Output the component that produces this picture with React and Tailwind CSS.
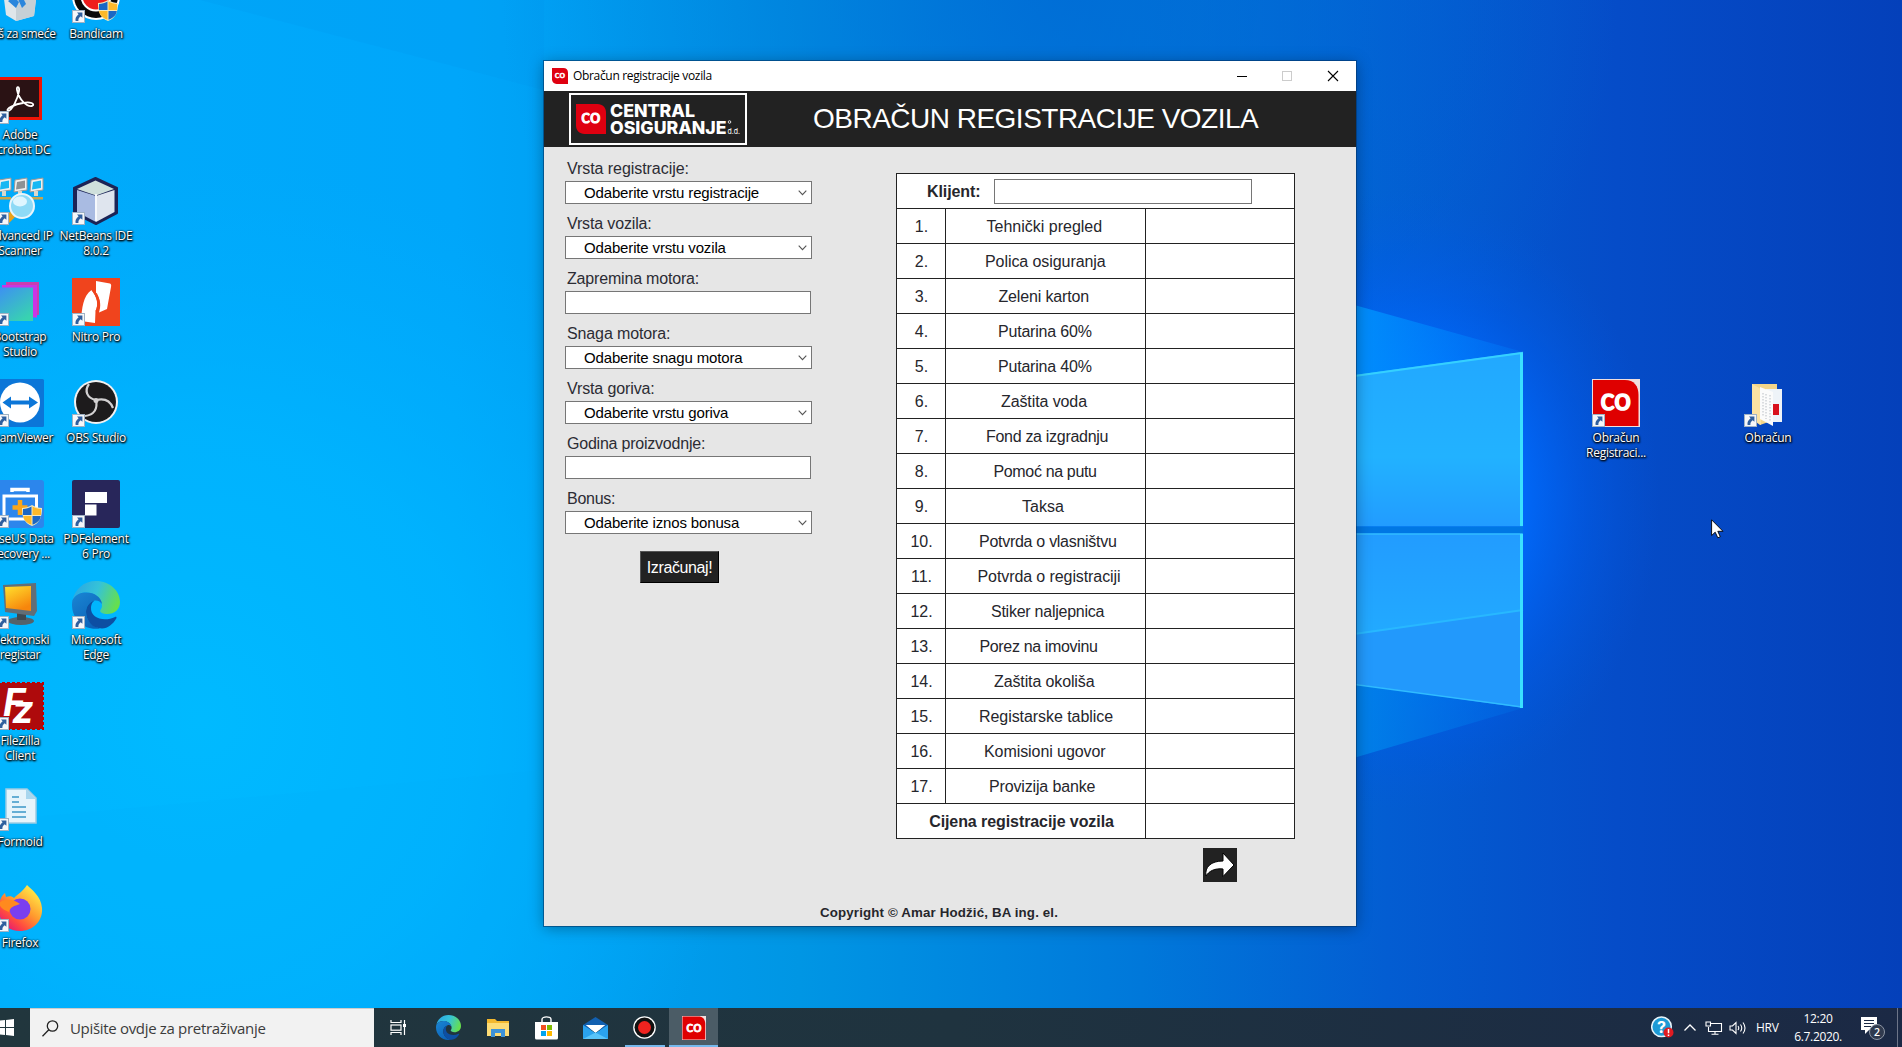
import React from "react";

const ROWS = [
  ["Tehnički pregled", "pl-[40.5px]"],
  ["Polica osiguranja", "pl-[39px] tracking-[-0.07px]"],
  ["Zeleni karton", "pl-[52.5px] tracking-[-0.15px]"],
  ["Putarina 60%", "pl-[52px] tracking-[-0.2px]"],
  ["Putarina 40%", "pl-[52px] tracking-[-0.2px]"],
  ["Zaštita voda", "pl-[55px] tracking-[-0.1px]"],
  ["Fond za izgradnju", "pl-[40px] tracking-[-0.3px]"],
  ["Pomoć na putu", "pl-[47.5px] tracking-[-0.35px]"],
  ["Taksa", "pl-[76px]"],
  ["Potvrda o vlasništvu", "pl-[33px] tracking-[-0.28px]"],
  ["Potvrda o registraciji", "pl-[31.5px] tracking-[-0.09px]"],
  ["Stiker naljepnica", "pl-[45px] tracking-[-0.25px]"],
  ["Porez na imovinu", "pl-[33.5px] tracking-[-0.35px]"],
  ["Zaštita okoliša", "pl-[48px] tracking-[-0.12px]"],
  ["Registarske tablice", "pl-[33px] tracking-[-0.06px]"],
  ["Komisioni ugovor", "pl-[38px] tracking-[-0.07px]"],
  ["Provizija banke", "pl-[43px] tracking-[-0.15px]"],
];

const FIELDS = [
  ["Vrsta registracije:", "Odaberite vrstu registracije", "tracking-[-0.06px]"],
  ["Vrsta vozila:", "Odaberite vrstu vozila", "tracking-[-0.15px]"],
  ["Zapremina motora:", null, "tracking-[-0.18px]"],
  ["Snaga motora:", "Odaberite snagu motora", "tracking-[-0.12px]"],
  ["Vrsta goriva:", "Odaberite vrstu goriva", "tracking-[-0.12px]"],
  ["Godina proizvodnje:", null, "tracking-[-0.22px]"],
  ["Bonus:", "Odaberite iznos bonusa", "tracking-[-0.25px]"],
];

function Wallpaper() {
  return (
    <svg className="absolute left-0 top-0 h-[1047px] w-[1902px]" viewBox="0 0 1902 1047">
      <defs>
        <linearGradient id="base" x1="0" x2="1" y1="0" y2="0">
          <stop offset="0" stopColor="#00abfb" />
          <stop offset="0.24" stopColor="#00a6fa" />
          <stop offset="0.42" stopColor="#0096e4" />
          <stop offset="0.6" stopColor="#0078da" />
          <stop offset="0.73" stopColor="#035dd2" />
          <stop offset="0.85" stopColor="#054cc8" />
          <stop offset="1" stopColor="#0440ba" />
        </linearGradient>
        <radialGradient id="leftGlow" gradientUnits="userSpaceOnUse" cx="200" cy="720" r="560">
          <stop offset="0" stopColor="#00baff" />
          <stop offset="0.5" stopColor="#00b6ff" stopOpacity="0.75" />
          <stop offset="1" stopColor="#00b0ff" stopOpacity="0" />
        </radialGradient>
        <radialGradient id="topDark" gradientUnits="userSpaceOnUse" cx="1060" cy="-20" r="560">
          <stop offset="0" stopColor="#0068d4" stopOpacity="0.75" />
          <stop offset="0.5" stopColor="#006cd6" stopOpacity="0.4" />
          <stop offset="1" stopColor="#0070d8" stopOpacity="0" />
        </radialGradient>
        <radialGradient id="glow" gradientUnits="userSpaceOnUse" cx="0" cy="0" r="1" gradientTransform="translate(1400 500) scale(260 310)">
          <stop offset="0" stopColor="#0078ff" />
          <stop offset="0.45" stopColor="#006cff" stopOpacity="0.9" />
          <stop offset="0.7" stopColor="#0060f4" stopOpacity="0.45" />
          <stop offset="1" stopColor="#0058e0" stopOpacity="0" />
        </radialGradient>
        <linearGradient id="pane" x1="0" x2="0" y1="0" y2="1">
          <stop offset="0" stopColor="#22a8ff" />
          <stop offset="0.6" stopColor="#22b2ff" />
          <stop offset="1" stopColor="#229cff" />
        </linearGradient>
        <linearGradient id="pane2" x1="0" x2="0" y1="0" y2="1">
          <stop offset="0" stopColor="#229cff" />
          <stop offset="1" stopColor="#22aaff" />
        </linearGradient>
        <linearGradient id="beam" x1="0" x2="1" y1="0" y2="0">
          <stop offset="0" stopColor="#0092fc" />
          <stop offset="1" stopColor="#0080ff" stopOpacity="0.25" />
        </linearGradient>
        <linearGradient id="beamLow" x1="0" x2="1" y1="0" y2="0">
          <stop offset="0" stopColor="#0084ea" />
          <stop offset="1" stopColor="#0070e8" stopOpacity="0.3" />
        </linearGradient>
      </defs>
      <rect width="1902" height="1047" fill="url(#base)" />
      <rect width="1902" height="1047" fill="url(#leftGlow)" />
      <rect width="1902" height="1047" fill="url(#topDark)" />
      <rect width="1902" height="1047" fill="url(#glow)" />
      <path d="M0 820 L544 770 V1010 H0z" fill="#00a9f4" opacity="0.12" />
      <path d="M200 0 L544 90 V0z" fill="#0088e8" opacity="0.12" />
      <path d="M1340 301 L1523 352 L1340 378z" fill="url(#beam)" />
      <path d="M1523 708 L1340 682 V762z" fill="url(#beamLow)" />
      <path d="M1340 377 L1523 352 V526.5 H1340z" fill="url(#pane)" />
      <path d="M1340 533.5 H1523 V610 L1340 636z" fill="url(#pane2)" />
      <path d="M1340 636 L1523 610 V708 L1340 682z" fill="#2299fc" />
      <path d="M1340 636 L1523 610" stroke="#28b8ff" strokeWidth="2" />
      <rect x="1340" y="526.5" width="183" height="7" fill="#0077e4" />
      <path d="M1340 378 L1522 353 V526" stroke="#35d0ff" strokeWidth="2" fill="none" />
      <path d="M1340 534 H1522 V707 L1340 682.5" stroke="#30bcff" strokeWidth="1.500" fill="none" />
      <path d="M1521.500 353 V526 M1521.500 534 V708" stroke="#3ae0ff" strokeWidth="3" />
    </svg>
  );
}

function Badge() {
  return (
    <svg className="absolute bottom-0 left-0 h-[13px] w-[13px]" viewBox="0 0 13 13">
      <rect x="0.5" y="0.5" width="12" height="12" fill="#f6f7f9" stroke="#9fb2c4" />
      <path d="M5 2.600h5.400v5.200L8.700 6.300C7 7.600 6.200 9 6.400 11H3.600C3 8.300 4.300 6 6.600 4.300z" fill="#2f5f9e" />
    </svg>
  );
}

function Shield({ x, y, s = 1 }) {
  return (
    <g transform={`translate(${x} ${y}) scale(${s})`}>
      <path d="M10 0C7 2 3 3 0 3C0 12 2 18 10 21C18 18 20 12 20 3C17 3 13 2 10 0z" fill="#f7e9b8" />
      <path d="M9.500 1.500C7 3 4 4 1 4V10H9.500z" fill="#1b67c4" />
      <path d="M10.500 1.500C13 3 16 4 19 4V10H10.500z" fill="#fdb92a" />
      <path d="M1.200 11H9.500V19.800C4 17.500 1.700 15 1.200 11z" fill="#fdb92a" />
      <path d="M18.800 11H10.500V19.800C16 17.500 18.300 15 18.800 11z" fill="#1b67c4" />
    </g>
  );
}

function EdgeGlyph({ id }) {
  return (
    <g>
      <defs>
        <linearGradient id={id + "a"} x1="0" x2="1" y1="0.2" y2="0.5">
          <stop offset="0" stopColor="#2aa6e4" />
          <stop offset="0.5" stopColor="#35c3d8" />
          <stop offset="1" stopColor="#66df4e" />
        </linearGradient>
        <linearGradient id={id + "b"} x1="0" x2="0.6" y1="0" y2="1">
          <stop offset="0" stopColor="#1a86d4" />
          <stop offset="1" stopColor="#0c63b8" />
        </linearGradient>
      </defs>
      <path d="M0.600 19C3 8 12 0 24 0C38 0 48 10 48 21C48 29 42 33 35.500 33C31 33 28 31.500 28.200 29.800C28.500 28.500 30 27.500 30 24.500C30 18 23 11.500 14 11.500C8 11.500 3 14 0.600 19z" fill={`url(#${id}a)`} />
      <path d="M0.500 19C4 13 9 11.500 14.500 11.500C22.500 11.500 29 16 30 23C28 20 25 19 22.500 19.500C17 21 14 26 14 31C14 38 19 45 28 47.500C12 50 0 38 0 24C0 22 0.200 20.500 0.500 19z" fill={`url(#${id}b)`} />
      <path d="M22.500 19.500C17 21 14 26 14 31C14 39 20 47.500 30 47.500C36 47.500 41 43 44.300 37.500C45 36.200 44 35.500 43 36C33 41 18 38 19 26C19.300 23 20.700 20.800 22.500 19.500z" fill="#0d4fa3" />
    </g>
  );
}

function CoMark({ size, className, square }) {
  return (
    <svg className={className} width={size} height={size} viewBox="0 0 48 48">
      {square ? (
        <g>
          <rect width="48" height="48" fill="#f0dede" />
          <path d="M1 1H33C42 1 46.500 7 46.500 16V47H1z" fill="#df0000" />
        </g>
      ) : (
        <path d="M0 0H34C43 0 48 6 48 14V48H14C5 48 0 42 0 34z" fill="#df0010" />
      )}
      <text x="8.500" y="31" fill="#fff" stroke="#fff" strokeWidth="1.700" fontFamily="Lato, sans-serif" fontWeight="400" fontSize="30" textLength="30.500" lengthAdjust="spacingAndGlyphs">co</text>
    </svg>
  );
}

const ICONS = {
  bin: (
    <g>
      <path d="M5 0L43 0L38 41L20 46L10 40z" fill="#dfe6ea" />
      <path d="M20 2L43 0L38 41L20 46z" fill="#c6d0d6" />
      <path d="M12 26l6-4 5 5-3 6zM22 24l5-1 3 6-4 4zM13 31l5 5" fill="#2a86dc" />
    </g>
  ),
  bandicam: (
    <g>
      <circle cx="24" cy="21" r="24" fill="#fff" />
      <circle cx="24" cy="21" r="22" fill="#0a0a0a" />
      <circle cx="24" cy="21" r="15.500" fill="#fff" />
      <circle cx="24" cy="21" r="13.500" fill="#ee1c1c" />
      <Shield x={26} y={25} />
    </g>
  ),
  acrobat: (
    <g>
      <rect y="1" width="46" height="43" fill="#ee1507" />
      <rect x="3" y="4" width="40" height="37" fill="#2a1214" />
      <path d="M12 35C16 35 22 22 23 15C24 10 20 10 21 14C23 24 31 31 36 30C40 28 34 25 27 27C19 28 9 33 12 35z" fill="none" stroke="#fff" strokeWidth="1.800" />
    </g>
  ),
  scanner: (
    <g>
      {[0, 16, 32].map((x, i) => (
        <g key={x}>
          <path d={`M${x + 3} 3L${x + 15} 1V13L${x + 2} 15z`} fill="#eef0ef" stroke="#999" />
          <path d={`M${x + 5} 5L${x + 13} 3.500V11L${x + 4} 12.500z`} fill={i === 1 ? "#8d9294" : "#18b8f3"} />
          <path d={`M${x + 6} 14v5h4v-5z`} fill="#d8d8cc" />
          <path d={`M${x + 1} 20h14v2.500h-14z`} fill="#c9a64c" />
        </g>
      ))}
      <path d="M18 36L8 46" stroke="#e9a21b" strokeWidth="7" />
      <circle cx="26" cy="29" r="12" fill="#8edaf6" stroke="#e9f5fb" strokeWidth="2" />
      <ellipse cx="24" cy="24.500" rx="7" ry="5" fill="#dff6ff" />
    </g>
  ),
  bootstrap: (
    <g>
      <defs>
        <linearGradient id="bs" x1="0" x2="0.700" y1="0" y2="1"><stop stopColor="#3d91f2" /><stop offset="1" stopColor="#38d3b0" /></linearGradient>
      </defs>
      <rect x="10" y="4" width="33" height="33" fill="#c93fae" />
      <rect x="6" y="7" width="35" height="32.500" fill="#cb35e6" />
      <rect x="4" y="9.500" width="33" height="33.500" fill="url(#bs)" />
    </g>
  ),
  teamviewer: (
    <g>
      <rect width="48" height="48" rx="1.500" fill="#0b76d8" />
      <circle cx="24" cy="23.500" r="20" fill="#fff" />
      <path d="M6.500 23.500L15 17.500V21.500H33V17.500L42 23.500L33 29.500V25.500H15V29.500z" fill="#0b76d8" />
    </g>
  ),
  easeus: (
    <g>
      <rect width="48" height="48" rx="3" fill="#2c86ec" />
      <path d="M16 12V9.500H32V12" fill="none" stroke="#fff" strokeWidth="3.500" />
      <rect x="8" y="16" width="32.500" height="23" fill="none" stroke="#fff" strokeWidth="3" />
      <path d="M24 20V35M16.500 27.500H31.500" stroke="#f9a61a" strokeWidth="4.500" />
      <Shield x={26} y={25} />
    </g>
  ),
  monitor: (
    <g>
      <defs>
        <linearGradient id="mo" x1="0" x2="0.500" y1="0" y2="1"><stop stopColor="#ffe22e" /><stop offset="1" stopColor="#f7860c" /></linearGradient>
      </defs>
      <ellipse cx="25" cy="40" rx="13" ry="4" fill="#54626b" />
      <path d="M21 30h9v9h-9z" fill="#3e4a52" />
      <path d="M7 4L40 2L41 30L38 35L9 31z" fill="#626e76" />
      <path d="M9 6L35 5V30L10 27z" fill="url(#mo)" />
    </g>
  ),
  filezilla: (
    <g>
      <rect x="1" y="1" width="46" height="46" fill="#ae0a0c" stroke="#bf0000" strokeWidth="2" strokeDasharray="3 2" />
      <text x="7" y="34" fill="#fff" fontFamily="Inter, sans-serif" fontWeight="700" fontStyle="italic" fontSize="38">F<tspan dx="-12" dy="7">z</tspan></text>
    </g>
  ),
  formoid: (
    <g>
      <path d="M10 6H31L40 15V40H10z" fill="#e6f4fb" stroke="#9ccbe4" strokeWidth="1.500" />
      <path d="M30 6V16H40z" fill="#a8d6ee" />
      <path d="M16 14h7M16 19h7M16 24h14M16 29h14M16 34h14" stroke="#65aed4" strokeWidth="2" />
    </g>
  ),
  firefox: (
    <g>
      <defs>
        <linearGradient id="ff" x1="0.900" x2="0.200" y1="0.100" y2="1"><stop stopColor="#fff14a" /><stop offset="0.450" stopColor="#ff9a2e" /><stop offset="0.750" stopColor="#ff4a40" /><stop offset="1" stopColor="#e1147c" /></linearGradient>
      </defs>
      <path d="M31 1C36 6 45 12 46 24C47 38 36 47 24 47C10 47 2 36 3 24C3 17 5 12 9 9L10 13C13 12 16 12 18 14C22 10 26 8 31 1z" fill="url(#ff)" />
      <circle cx="24" cy="25" r="10.500" fill="#7a3ff0" />
      <path d="M3 19C8 14 18 15 24 20C18 22 14 23 13 28C8 26 4 24 3 19z" fill="#ff8a1e" />
    </g>
  ),
  netbeans: (
    <g>
      <path d="M23.500 1L45 11V36L24 47L2 36V11z" fill="#1c2456" stroke="#1c2456" strokeWidth="2" strokeLinejoin="round" />
      <path d="M23.500 3.500L42 12L24 18.500L5 12z" fill="#cfe0dc" />
      <path d="M5 13L24 19V45L5 35z" fill="#a9bbe2" />
      <path d="M24 19L42.500 13V35L24 45z" fill="#dfe5ee" />
      <path d="M24 17V44" stroke="#f5f8fc" strokeWidth="2" />
    </g>
  ),
  nitro: (
    <g>
      <rect width="48" height="48" fill="#f0441d" />
      <path d="M24 3L38 5.500C39 6 39.500 7 39 9L35 31L27 34.500C29 28 29 22 24 15z" fill="#fff" />
      <path d="M19.500 12C25 19 27 26 23.500 33L23 45L9 43C10 30 11 18 19.500 12z" fill="#fff" />
      <path d="M19.500 11L25 15.500C28.500 22 28.500 28 26 35L23.500 33C27 26 25 19 19.500 12z" fill="#f0441d" />
    </g>
  ),
  obs: (
    <g>
      <circle cx="24" cy="23" r="22" fill="#f1f1f1" />
      <circle cx="24" cy="23" r="20" fill="#1d1b1c" />
      <path d="M17 5C12 12 15 19 24 21C32 19 38 21 41 29M24 21C26 30 22 36 13 37" fill="none" stroke="#d2d0d1" strokeWidth="2.200" />
      <circle cx="24" cy="21.500" r="2.500" fill="#d2d0d1" />
    </g>
  ),
  pdfelement: (
    <g>
      <rect width="48" height="48" rx="2" fill="#28265a" />
      <path d="M13 12H35V23H13zM13 24.500H24.500V35.500H13z" fill="#fff" />
    </g>
  ),
  edge: <EdgeGlyph id="ed" />,
};

function DesktopIcon({ icon, lines, children, className = "" }) {
  return (
    <div className={`flex w-[76px] flex-col items-center ${className}`}>
      <div className="relative h-12 w-12">
        {children || (
          <svg width="48" height="48" viewBox="0 0 48 48" className="overflow-visible">{ICONS[icon]}</svg>
        )}
        {icon !== "bin" && <Badge />}
      </div>
      <div className="mt-[3px] font-['Open_Sans',sans-serif] text-xs leading-[15px] tracking-[-0.28px] text-white [text-shadow:1px_1px_2px_#000,0_1px_2px_#000,0_0_2px_#000]">
        {lines.map((l) => (
          <div key={l} className="flex justify-center whitespace-nowrap">{l}</div>
        ))}
      </div>
    </div>
  );
}

const LEFT = [
  ["bin", "Koš za smeće"],
  ["acrobat", "Adobe", "Acrobat DC"],
  ["scanner", "Advanced IP", "Scanner"],
  ["bootstrap", "Bootstrap", "Studio"],
  ["teamviewer", "TeamViewer"],
  ["easeus", "EaseUS Data", "Recovery ..."],
  ["monitor", "Elektronski", "registar"],
  ["filezilla", "FileZilla", "Client"],
  ["formoid", "Formoid"],
  ["firefox", "Firefox"],
];
const SECOND = [
  ["bandicam", "Bandicam"],
  null,
  ["netbeans", "NetBeans IDE", "8.0.2"],
  ["nitro", "Nitro Pro"],
  ["obs", "OBS Studio"],
  ["pdfelement", "PDFelement", "6 Pro"],
  ["edge", "Microsoft", "Edge"],
];

function Column({ items }) {
  return (
    <div className="flex flex-col">
      {items.map((it, i) => (
        <div key={i} className="h-[101px]">
          {it && <DesktopIcon icon={it[0]} lines={it.slice(1)} />}
        </div>
      ))}
    </div>
  );
}

function Logo() {
  return (
    <div className="flex h-[52px] w-[178px] items-center border-2 border-white pl-[5px]">
      <CoMark size={30} />
      <svg className="ml-1" width="132" height="34" viewBox="0 0 132 34" fill="#fff" fontFamily="Inter, sans-serif" fontWeight="800">
        <text x="0" y="15" fontSize="17.500" textLength="85" lengthAdjust="spacingAndGlyphs">CENTRAL</text>
        <text x="0" y="31.500" fontSize="17.500" textLength="116.500" lengthAdjust="spacingAndGlyphs">OSIGURANJE</text>
        <circle cx="119.500" cy="20" r="1.300" fill="none" stroke="#fff" strokeWidth="0.800" />
        <text x="117.500" y="31.500" fontSize="8" fontWeight="400" textLength="12.500" lengthAdjust="spacingAndGlyphs">d.d.</text>
      </svg>
    </div>
  );
}

function Field({ label, value, spacing }) {
  return (
    <div className="h-[55px]">
      <div className={`h-[22px] pl-[2px] pt-px text-base leading-[18px] text-[#2c2c34] ${spacing}`}>{label}</div>
      {value ? (
        <div className="flex h-[23px] w-[247px] items-center justify-between border border-[#767676] bg-white pl-[18px] pr-1 text-[15px] leading-none tracking-[-0.150px] text-black">
          <span>{value}</span>
          <svg width="9" height="6" viewBox="0 0 9 6"><path d="M0.700 0.700L4.500 4.700L8.300 0.700" fill="none" stroke="#555" strokeWidth="1.100" /></svg>
        </div>
      ) : (
        <div className="h-[23px] w-[246px] border border-[#767676] bg-white" />
      )}
    </div>
  );
}

function AppWindow() {
  return (
    <div className="absolute left-[544px] top-[61px] flex h-[865px] w-[812px] flex-col bg-[#e6e6e6] font-['Liberation_Sans',Arial,sans-serif] shadow-[0_0_0_1px_rgba(0,50,100,0.55),0_2px_14px_rgba(0,0,0,0.35)]">
      <div className="flex h-[30px] items-center bg-white pl-2">
        <CoMark size={16} />
        <div className="ml-[5px] flex-1 font-['Open_Sans',sans-serif] text-xs tracking-[-0.330px] text-black">Obračun registracije vozila</div>
        <svg width="112" height="12" viewBox="0 0 112 12" className="mr-3" fill="none">
          <path d="M5 6.500H15" stroke="#000" />
          <rect x="50.500" y="1.500" width="9" height="9" stroke="#ccc" />
          <path d="M96 1L106 11M106 1L96 11" stroke="#000" strokeWidth="1.100" />
        </svg>
      </div>
      <div className="flex h-14 items-start bg-[#222] pl-[25px] pt-[2px]">
        <Logo />
        <div className="ml-[66px] mt-[10px] whitespace-nowrap text-[28px] leading-8 tracking-[-0.510px] text-white">OBRAČUN REGISTRACIJE VOZILA</div>
      </div>
      <div className="flex flex-1">
        <div className="w-[352px] pl-[21px] pt-3">
          {FIELDS.map(([l, v, s]) => <Field key={l} label={l} value={v} spacing={s} />)}
          <div className="ml-[75px] mt-[7px] flex h-8 w-[79px] items-center justify-center border border-b-black border-l-[#555] border-r-black border-t-[#555] bg-[#222] pt-px text-base tracking-[-0.400px] text-white">Izračunaj!</div>
        </div>
        <div className="w-[460px] pt-[26px]">
          <div className="w-[399px] border-b border-l border-[#222] bg-white text-base text-[#26262c]">
            <div className="flex h-[35px] border-r border-t border-[#222] pl-[30px]">
              <div className="pt-[9px] text-base font-bold leading-[18px] tracking-[-0.100px]">Klijent:</div>
              <div className="ml-[14px] mt-[5px] h-[25px] w-[258px] border border-[#767676]" />
            </div>
            {ROWS.map(([t, c], i) => (
              <div key={t} className="grid h-[35px] grid-cols-[49px_200px_149px] leading-8">
                <div className="border-r border-t border-[#222] pl-px pt-0.5 text-center">{i + 1}.</div>
                <div className={`whitespace-nowrap border-r border-t border-[#222] pt-0.5 ${c}`}>{t}</div>
                <div className="border-r border-t border-[#222]" />
              </div>
            ))}
            <div className="grid h-[35px] grid-cols-[249px_149px] leading-8">
              <div className="border-r border-t border-[#222] pl-px pt-0.5 text-center font-bold tracking-[-0.080px]">Cijena registracije vozila</div>
              <div className="border-r border-t border-[#222]" />
            </div>
          </div>
          <svg className="ml-[307px] mt-[9px]" width="34" height="34" viewBox="0 0 34 34">
            <rect width="34" height="34" fill="#222" />
            <path d="M3 28C1.500 19 8 13 20 13V5L31 17L20 28.500V21C12 20 6 23 3 28z" fill="#fff" stroke="#000" strokeWidth="1" />
          </svg>
        </div>
      </div>
      <div className="flex h-[21px] items-start pl-[276px] text-[13.300px] font-bold leading-4 tracking-[0.150px] text-[#26262c]">Copyright © Amar Hodžić, BA ing. el.</div>
    </div>
  );
}

function Slot({ children, className = "" }) {
  return <div className={`flex h-full w-[49px] shrink-0 items-center justify-center ${className}`}>{children}</div>;
}

function Taskbar() {
  return (
    <div className="relative flex h-[39px] items-center bg-linear-to-r from-[#21363d] via-[#1f333f] to-[#1b2945] font-['Open_Sans',sans-serif]">
      <div className="flex w-[30px] items-center">
        <svg width="15" height="17" viewBox="0 0 15 17" fill="#fff"><path d="M0 1.500L5 1V8H0zM6 0.900L14 0V8H6zM0 9H5V16L0 15.400zM6 9H14V17L6 16.100z" /></svg>
      </div>
      <div className="flex h-full w-[344px] items-center border-t border-[#ccc] bg-[#f2f2f2] pl-3">
        <svg width="17" height="17" viewBox="0 0 17 17" fill="none" stroke="#222" strokeWidth="1.300"><circle cx="10.500" cy="6" r="5.200" /><path d="M6.800 9.800L0.500 16.200" /></svg>
        <span className="ml-[11px] whitespace-nowrap text-[15px] tracking-[-0.320px] text-[#3c3c3c]">Upišite ovdje za pretraživanje</span>
      </div>
      <Slot>
        <svg width="17" height="17" viewBox="0 0 17 17" fill="none" stroke="#fff" strokeWidth="1.200">
          <path d="M1 1V3.500H11V1M1 16V13.500H11V16M14.500 1V16" /><rect x="1" y="6" width="10" height="5.200" /><rect x="13" y="5" width="3" height="3" fill="#fff" stroke="none" />
        </svg>
      </Slot>
      <Slot className="ml-px"><svg width="25" height="25" viewBox="0 0 48 48"><EdgeGlyph id="tb" /></svg></Slot>
      <Slot>
        <svg width="22" height="20" viewBox="0 0 22 20"><path d="M0 1H8L10 3H22V18H0z" fill="#f3b82e" /><path d="M0 5H22V18H0z" fill="#fddc76" /><path d="M4 19V11H18V19H14V15H8V19z" fill="#3d92d8" /></svg>
      </Slot>
      <Slot>
        <svg width="23" height="24" viewBox="0 0 23 24"><path d="M7 7V3.500C7 0 16 0 16 3.500V7" fill="none" stroke="#fff" strokeWidth="1.400" /><path d="M0 6H23V22Q23 23.500 21.500 23.500H1.500Q0 23.500 0 22z" fill="#fff" /><path d="M6 9H11V14H6z" fill="#f25022" /><path d="M12 9H17V14H12z" fill="#7fba00" /><path d="M6 15H11V20H6z" fill="#00a4ef" /><path d="M12 15H17V20H12z" fill="#ffb900" /></svg>
      </Slot>
      <Slot>
        <svg width="25" height="22" viewBox="0 0 25 22"><path d="M0 8L12.500 0L25 8V13H0z" fill="#1260b0" /><path d="M3 8H22L12.500 16z" fill="#fff" /><path d="M0 8L12.500 16L25 8V22H0z" fill="#2aa2ee" /><path d="M3 8H22L12.500 15.500z" fill="#fff" /><path d="M0 22L12.500 15.500L25 22z" fill="#58c4fa" /></svg>
      </Slot>
      <Slot className="relative">
        <svg width="23" height="23" viewBox="0 0 23 23"><circle cx="11.500" cy="11.500" r="11.300" fill="#fff" /><circle cx="11.500" cy="11.500" r="10" fill="#111" /><circle cx="11.500" cy="11.500" r="6.500" fill="#f0231f" /></svg>
        <div className="absolute bottom-0 left-[5px] h-[2px] w-10 bg-[#76b9ed]" />
      </Slot>
      <Slot className="relative bg-[#4b5c66]">
        <CoMark size={24} square />
        <div className="absolute bottom-0 left-0 h-[2px] w-full bg-[#76b9ed]" />
      </Slot>
      <div className="ml-auto flex h-full items-center text-white">
        <svg width="23" height="23" viewBox="0 0 23 23">
          <circle cx="10.500" cy="10.800" r="9.800" fill="#1d9ad6" stroke="#e8f4fa" strokeWidth="1.500" />
          <text x="10.500" y="16.500" textAnchor="middle" fill="#fff" fontFamily="Inter, sans-serif" fontWeight="700" fontSize="16">?</text>
          <circle cx="17.500" cy="16.500" r="5" fill="#e01b22" /><path d="M17.500 13V17.300M17.500 18.500V20" stroke="#fff" strokeWidth="1.500" />
        </svg>
        <svg className="ml-[10px]" width="12" height="7" viewBox="0 0 12 7" fill="none" stroke="#fff" strokeWidth="1.300"><path d="M0.500 6.500L6 1L11.500 6.500" /></svg>
        <svg className="ml-[9px]" width="18" height="14" viewBox="0 0 18 14" fill="none" stroke="#fff" strokeWidth="1.100"><path d="M6 2.500H16.500V10.500H3.500V6M10 10.500V13M6.500 13.200H13.500" /><path d="M1 1H5.500V5H1z" /></svg>
        <svg className="ml-[6px]" width="18" height="14" viewBox="0 0 18 14" fill="none" stroke="#fff" strokeWidth="1.100"><path d="M1 5H3.500L7 1.500V12.500L3.500 9H1zM9 5Q10.500 7 9 9M11.500 3.500Q14 7 11.500 10.500M14 1.500Q18 7 14 12.500" /></svg>
        <span className="ml-[9px] w-6 text-xs tracking-[-0.300px]">HRV</span>
        <div className="ml-[13px] flex w-[50px] flex-col items-center text-xs leading-[18px] tracking-[-0.350px]"><span>12:20</span><span>6.7.2020.</span></div>
        <svg className="ml-[18px]" width="26" height="26" viewBox="0 0 26 26">
          <path d="M0 2H16V15H8L4 19V15H0z" fill="#fff" /><path d="M3 5.500H13M3 8.500H13M3 11.500H10" stroke="#1b2945" />
          <circle cx="16" cy="17" r="7.500" fill="#303a4e" stroke="#8d95a3" />
          <text x="16" y="21" textAnchor="middle" fill="#fff" fontFamily="Open Sans, sans-serif" fontWeight="600" fontSize="10.500">2</text>
        </svg>
        <div className="ml-[10px] mr-1 h-full w-px bg-[#6d7588]" />
      </div>
    </div>
  );
}

export default function App() {
  return (
    <div className="relative flex h-[1047px] w-[1902px] flex-col overflow-hidden">
      <div className="relative h-[1008px] overflow-hidden">
        <Wallpaper />
        <div className="relative -ml-[18px] -mt-[25px] flex">
          <Column items={LEFT} />
          <Column items={SECOND} />
        </div>
        <DesktopIcon lines={["Obračun", "Registraci..."]} className="absolute left-[1578px] top-[379px]"><CoMark size={48} square /></DesktopIcon>
        <DesktopIcon lines={["Obračun"]} className="absolute left-[1730px] top-[379px]">
          <svg width="48" height="48" viewBox="0 0 48 48">
            <path d="M8 5H33V40L16 46L8 40z" fill="#f3d58a" />
            <path d="M8 5L17 10V46L8 40z" fill="#fbe3a3" />
            <path d="M22 10L38 10V43H22z" fill="#eef3f8" /><path d="M28 25H35V36H28z" fill="#d8101c" />
            <path d="M16 8L29 13V47L16 40z" fill="#fbfbfb" />
            <path d="M19 14V38M22 15V40M26 16V42" stroke="#b9bec4" strokeWidth="1" strokeDasharray="1.500 1.500" />
          </svg>
        </DesktopIcon>
        <AppWindow />
        <svg className="absolute left-[1711px] top-[519px]" width="13" height="20" viewBox="0 0 13 20"><path d="M0.600 0.800V16.500L4.200 13.200L6.800 18.800L9.300 17.700L6.800 12.300H12z" fill="#fff" stroke="#000" strokeWidth="0.900" /></svg>
      </div>
      <Taskbar />
    </div>
  );
}
